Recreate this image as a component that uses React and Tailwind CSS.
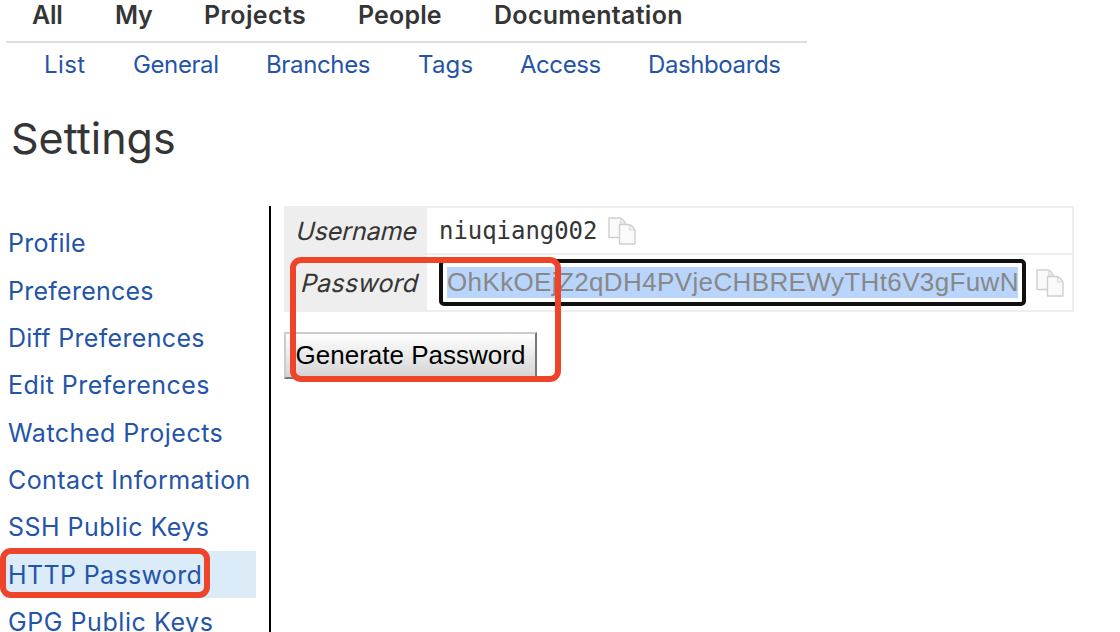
const mainMenu = [
  { label: "All", cell: "w-[83px]", track: "tracking-[-0.3px]" },
  { label: "My", cell: "w-[89px]", track: "tracking-[-0.3px]" },
  { label: "Projects", cell: "w-[154px]", track: "tracking-[0.4px]" },
  { label: "People", cell: "w-[136px]", track: "tracking-[0.15px]" },
  { label: "Documentation", cell: "w-[200px]", track: "tracking-[0.3px]" },
];

const subMenu = [
  { label: "List", cell: "w-[89px]", track: "tracking-[0.4px]" },
  { label: "General", cell: "w-[133px]", track: "tracking-[-0.4px]" },
  { label: "Branches", cell: "w-[152px]", track: "tracking-[-0.35px]" },
  { label: "Tags", cell: "w-[102px]", track: "tracking-[0.2px]" },
  { label: "Access", cell: "w-[128px]", track: "tracking-[-0.45px]" },
  { label: "Dashboards", cell: "w-[150px]", track: "tracking-[-0.4px]" },
];

const sections = [
  { label: "Profile", track: "tracking-[0.3px]" },
  { label: "Preferences", track: "tracking-[0.25px]" },
  { label: "Diff Preferences", track: "tracking-[0.32px]" },
  { label: "Edit Preferences", track: "tracking-[0.45px]" },
  { label: "Watched Projects", track: "tracking-[0.5px]" },
  { label: "Contact Information", track: "tracking-[0.43px]" },
  { label: "SSH Public Keys", track: "tracking-[0.48px]" },
  { label: "HTTP Password", track: "tracking-[0.36px]", active: true },
  { label: "GPG Public Keys", track: "tracking-[0.57px]" },
];

function CopyIcon() {
  return (
    <svg width="28" height="28" viewBox="0 0 28 28" className="block shrink-0" fill="#fafafa" stroke="#cfcfcf" strokeWidth="1.4" strokeLinejoin="round">
      <path d="M1 1H12C14 1.5 17 4.5 17.5 6.500V20.500H1Z" />
      <path d="M12 1C13 3 13 5 12.500 6C14 5.500 16 5.500 17.500 6.500" fill="none" stroke="#dedede" />
      <path d="M11.500 7.500H21C23 8 26.500 11 27 13.500V27H11.500Z" />
      <path d="M21 7.500C22 9.500 22 11.500 21.500 13C23 12.500 25.500 12.500 27 13.500" fill="none" stroke="#dedede" />
    </svg>
  );
}

export default function App() {
  return (
    <div className="relative flex h-[632px] w-[1120px] flex-col overflow-hidden bg-white font-['Inter',sans-serif] text-[#353535]">
      <nav className="ml-[6px] flex h-[43px] w-[801px] shrink-0 border-b-2 border-[#dddddd] pl-[26px] text-[25px] leading-[30px] font-semibold whitespace-nowrap">
        {mainMenu.map((m) => (
          <a key={m.label} className={`${m.cell} ${m.track}`}>{m.label}</a>
        ))}
      </nav>
      <nav className="flex h-[44px] shrink-0 pt-[7px] pl-[44px] text-[24px] leading-[30px] whitespace-nowrap text-[#2454a8]">
        {subMenu.map((m) => (
          <a key={m.label} className={`${m.cell} ${m.track}`}>{m.label}</a>
        ))}
      </nav>
      <h1 className="h-[119px] shrink-0 pt-[26px] pl-[11px] text-[43px] leading-[50px] font-normal tracking-[0px]">Settings</h1>
      <div className="flex h-[426px] shrink-0">
        <aside className="w-[271px] shrink-0 border-r-2 border-black pt-[13.2px] pr-[13px] pl-[3px]">
          <ul>
            {sections.map((s) => (
              <li key={s.label} className={`h-[47.36px] pl-[5px] text-[25px] leading-[48px] whitespace-nowrap text-[#2454a8] ${s.track} ${s.active ? "bg-[#dcebf8]" : ""}`}>
                {s.label}
              </li>
            ))}
          </ul>
        </aside>
        <main className="ml-[13px] flex flex-col items-start">
          <div className="grid h-[106px] w-[790px] grid-cols-[143px_1fr] grid-rows-[49px_57px] border-r-2 border-[#eeeeee] whitespace-nowrap">
            <div className="bg-[#eeeeee] pr-[9px] text-right text-[25px] leading-[50px] tracking-[-0.1px]">
              <span className="inline-block -skew-x-[14deg]">Username</span>
            </div>
            <div className="flex items-center gap-[11px] border-y-2 border-[#eeeeee] pl-[12px]">
              <span className="font-['DejaVu_Sans_Mono',monospace] text-[24px] tracking-[-0.05px]">niuqiang002</span>
              <CopyIcon />
            </div>
            <div className="bg-[#eeeeee] pr-[8px] text-right text-[25px] leading-[56px] tracking-[0.15px]">
              <span className="inline-block -skew-x-[14deg]">Password</span>
            </div>
            <div className="flex items-center gap-[10px] border-b-2 border-[#eeeeee] pl-[12px]">
              <div className="flex h-[47px] w-[587px] shrink-0 items-center justify-center rounded-[5px] border-4 border-[#101010] bg-white">
                <span className="h-[31px] w-[571px] bg-[#b9d5fb] font-['Liberation_Sans',sans-serif] text-[26px] leading-[31px] tracking-[0.37px] text-[#888888]">OhKkOEjZ2qDH4PVjeCHBREWyTHt6V3gFuwN</span>
              </div>
              <CopyIcon />
            </div>
          </div>
          <button className="mt-[20px] h-[47px] w-[253px] border-2 border-t-[#cccccc] border-r-[#777777] border-b-[#777777] border-l-[#cccccc] bg-linear-to-b from-white to-[#d4d4d4] text-center font-['Liberation_Sans',sans-serif] text-[26px] leading-[41px] whitespace-nowrap text-black">
            Generate Password
          </button>
        </main>
      </div>
      <div className="absolute top-[257px] left-[290px] h-[125px] w-[271px] rounded-[11px] border-6 border-[#ee4429]" />
      <div className="absolute top-[548px] left-0 h-[50px] w-[210px] rounded-[11px] border-6 border-[#ee4429]" />
    </div>
  );
}
